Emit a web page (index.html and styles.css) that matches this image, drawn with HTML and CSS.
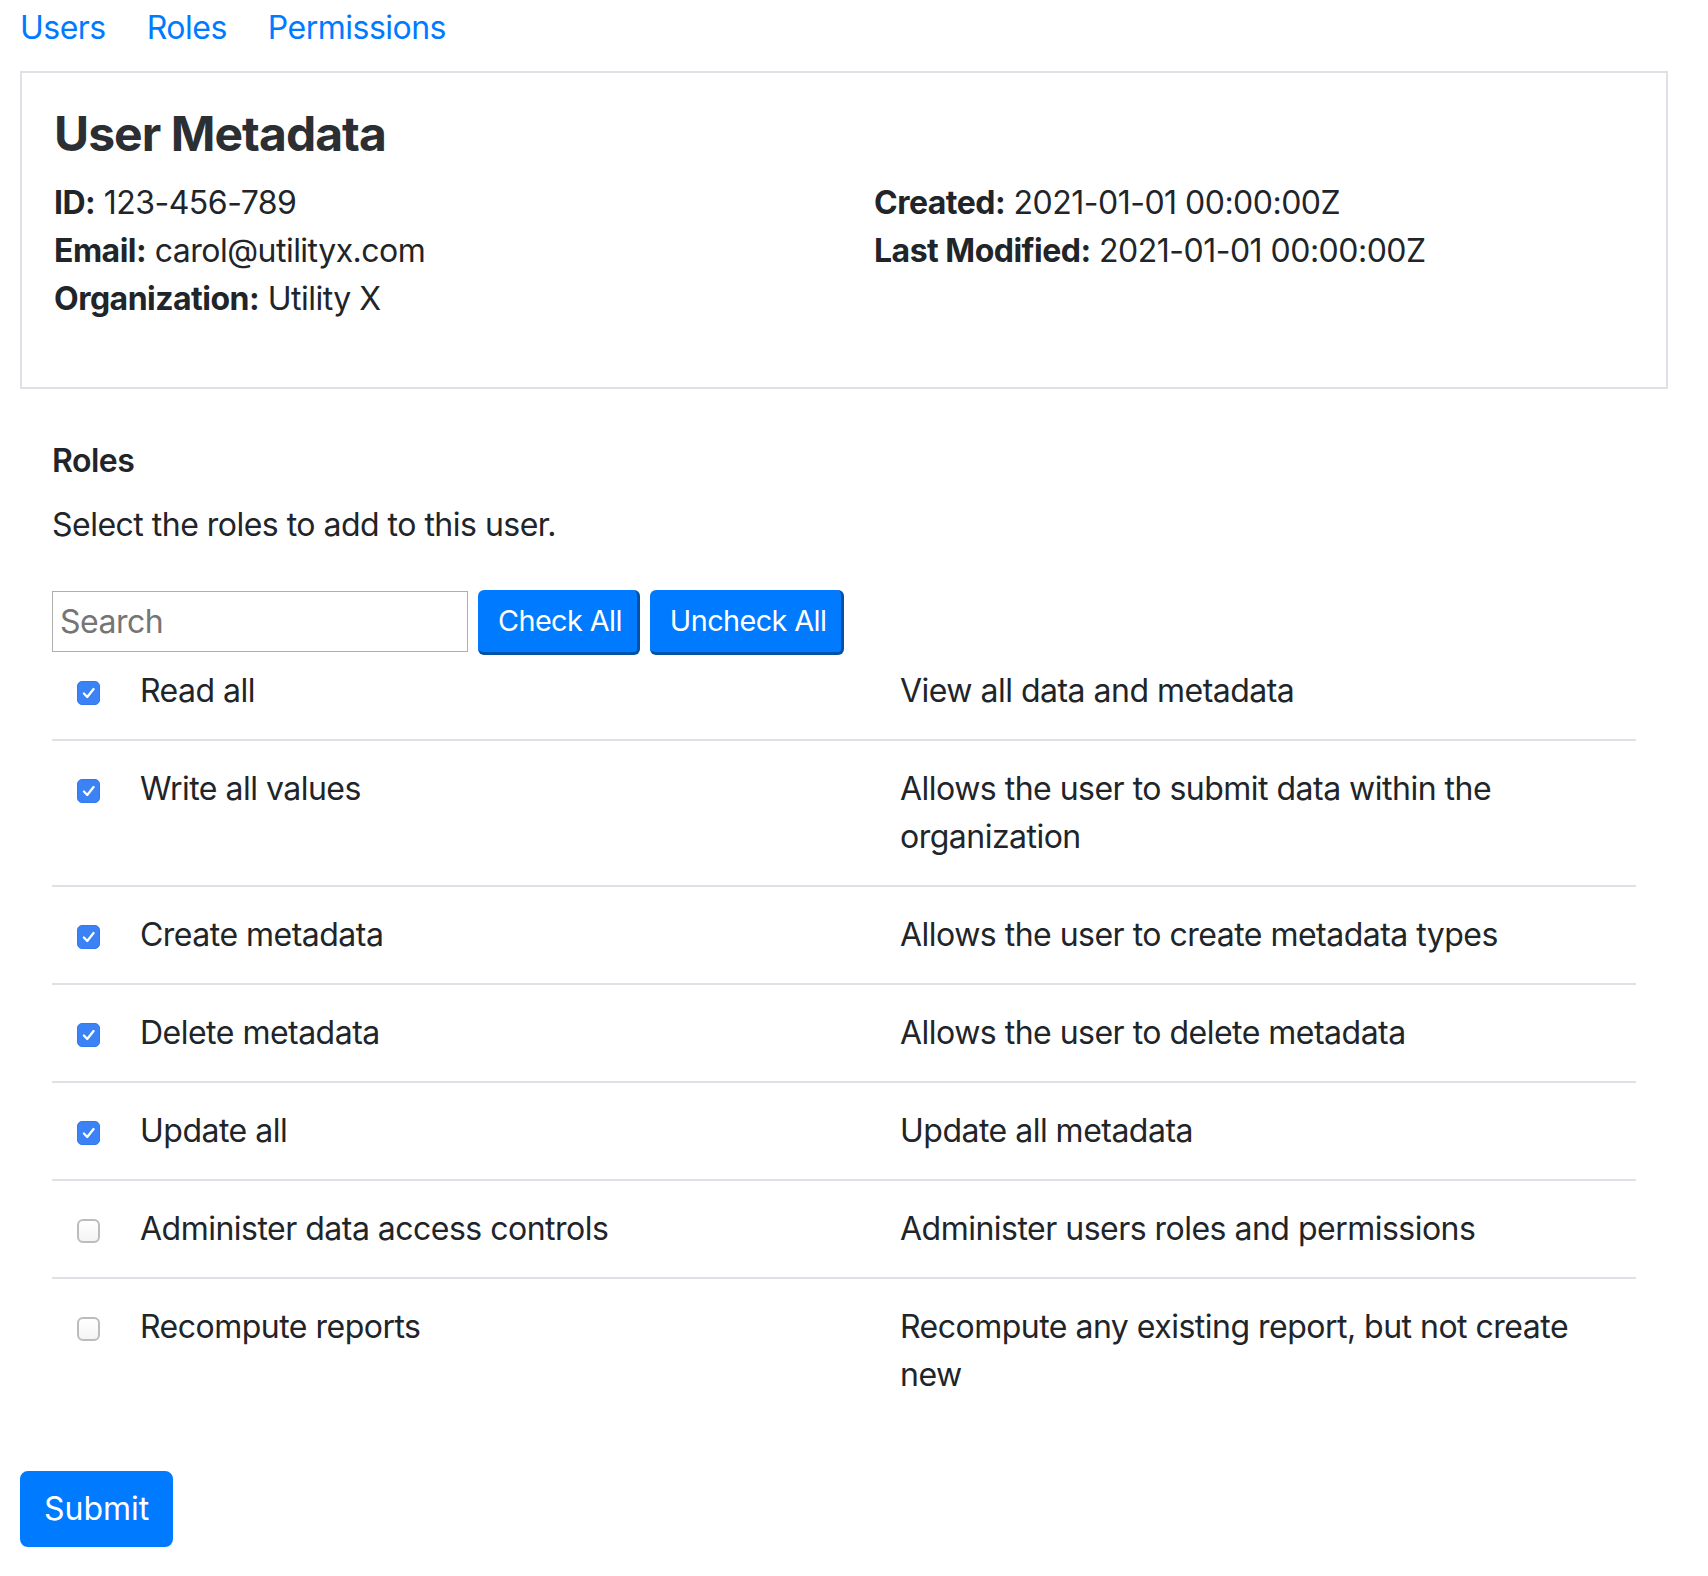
FILE: index.html
```html
<!DOCTYPE html>
<html lang="en">
<head>
<meta charset="utf-8">
<title>User Metadata</title>
<link rel="stylesheet" href="styles.css">
</head>
<body>
<div class="page">
  <nav class="tabs">
    <a href="#">Users</a>
    <a href="#">Roles</a>
    <a href="#">Permissions</a>
  </nav>

  <div class="card">
    <h4 class="card-title">User Metadata</h4>
    <div class="meta">
      <div class="meta-col">
        <div><b>ID:</b> 123-456-789</div>
        <div><b>Email:</b> carol@utilityx.com</div>
        <div><b>Organization:</b> Utility X</div>
      </div>
      <div class="meta-col">
        <div><b>Created:</b> 2021-01-01 00:00:00Z</div>
        <div><b>Last Modified:</b> 2021-01-01 00:00:00Z</div>
      </div>
    </div>
  </div>

  <section class="roles">
    <h6 class="roles-title">Roles</h6>
    <p class="roles-lead">Select the roles to add to this user.</p>
    <div class="controls">
      <input class="search" type="text" placeholder="Search">
      <button class="action" type="button">Check All</button>
      <button class="action" type="button">Uncheck All</button>
    </div>
    <div class="role-table">
      <div class="role">
        <div class="cell check-cell"><span class="cb on"><svg viewBox="0 0 24 24"><path d="M6.6 12.6 L10.3 16.4 L17.4 7.6"/></svg></span></div>
        <div class="cell">Read all</div>
        <div class="cell">View all data and metadata</div>
      </div>
      <div class="role">
        <div class="cell check-cell"><span class="cb on"><svg viewBox="0 0 24 24"><path d="M6.6 12.6 L10.3 16.4 L17.4 7.6"/></svg></span></div>
        <div class="cell">Write all values</div>
        <div class="cell">Allows the user to submit data within the organization</div>
      </div>
      <div class="role">
        <div class="cell check-cell"><span class="cb on"><svg viewBox="0 0 24 24"><path d="M6.6 12.6 L10.3 16.4 L17.4 7.6"/></svg></span></div>
        <div class="cell">Create metadata</div>
        <div class="cell">Allows the user to create metadata types</div>
      </div>
      <div class="role">
        <div class="cell check-cell"><span class="cb on"><svg viewBox="0 0 24 24"><path d="M6.6 12.6 L10.3 16.4 L17.4 7.6"/></svg></span></div>
        <div class="cell">Delete metadata</div>
        <div class="cell">Allows the user to delete metadata</div>
      </div>
      <div class="role">
        <div class="cell check-cell"><span class="cb on"><svg viewBox="0 0 24 24"><path d="M6.6 12.6 L10.3 16.4 L17.4 7.6"/></svg></span></div>
        <div class="cell">Update all</div>
        <div class="cell">Update all metadata</div>
      </div>
      <div class="role">
        <div class="cell check-cell"><span class="cb off"></span></div>
        <div class="cell">Administer data access controls</div>
        <div class="cell">Administer users roles and permissions</div>
      </div>
      <div class="role">
        <div class="cell check-cell"><span class="cb off"></span></div>
        <div class="cell">Recompute reports</div>
        <div class="cell">Recompute any existing report, but not create new</div>
      </div>
    </div>
  </section>

  <button class="submit" type="button">Submit</button>
</div>
</body>
</html>
```

FILE: styles.css
```css
html, body {
  margin: 0;
  padding: 0;
  background: #fff;
}

body {
  font-family: Inter, "Liberation Sans", sans-serif;
  font-size: 32px;
  line-height: 48px;
  letter-spacing: -0.016em;
  color: #212529;
}

.page {
  width: 1648px;
  margin-left: 20px;
}

.tabs {
  display: flex;
  gap: 41px;
  height: 48px;
  padding-top: 4px;
  margin-bottom: 19px;
}

.tabs a {
  color: #007bff;
  text-decoration: none;
}

.card {
  border: 2px solid #dee2e6;
  padding: 32px;
}

.card-title {
  margin: 0 0 16px;
  font-size: 48px;
  line-height: 57.6px;
  font-weight: 700;
  letter-spacing: -0.02em;
  color: #2b2f33;
}

.meta {
  display: grid;
  grid-template-columns: 820px 1fr;
  margin-bottom: 32px;
}

.meta b {
  font-weight: 700;
}

.roles {
  padding: 0 32px;
  margin-top: 48px;
}

.roles-title {
  margin: 0 0 16px;
  font-size: 32px;
  line-height: 48px;
  font-weight: 600;
}

.roles-lead {
  margin: 0 0 41px;
}

.controls {
  display: flex;
  align-items: flex-start;
  gap: 10px;
}

.search {
  box-sizing: border-box;
  width: 416px;
  height: 61px;
  margin: 1px 0 0;
  padding: 0 7px;
  border: 1px solid #aeaeae;
  border-radius: 0;
  font-family: inherit;
  font-size: 32px;
  letter-spacing: -0.016em;
  color: #212529;
  outline: none;
}

.search::placeholder {
  color: #757575;
}

.action {
  box-sizing: border-box;
  height: 65px;
  padding: 0 15px 0 20px;
  background: #007bff;
  color: #fff;
  border: 0;
  border-right: 3px solid #0052a6;
  border-bottom: 3px solid #0052a6;
  border-radius: 6px;
  font-family: inherit;
  font-size: 28.8px;
  letter-spacing: -0.02em;
  line-height: 34px;
}

.role {
  display: grid;
  grid-template-columns: 64px 1fr 1fr;
  padding: 24px 0;
  border-bottom: 2px solid #dee2e6;
}

.role:first-child {
  padding-top: 12px;
}

.role:last-child {
  border-bottom: 0;
}

.cell {
  padding: 0 24px;
}

.check-cell {
  padding: 0 0 0 24.5px;
}

.cb {
  display: block;
  box-sizing: border-box;
  width: 23.5px;
  height: 24px;
  margin-top: 14.5px;
  border-radius: 5px;
}

.cb.on {
  background: #3a82f6;
  border: 1px solid #3479ee;
}

.cb.on svg {
  display: block;
  width: 100%;
  height: 100%;
}

.cb.on path {
  fill: none;
  stroke: #fff;
  stroke-width: 2.6;
  stroke-linecap: round;
  stroke-linejoin: round;
}

.cb.off {
  background: linear-gradient(#ffffff, #f4f4f4);
  border: 2px solid #bcbcbc;
  border-radius: 6px;
}

.submit {
  display: block;
  margin-top: 48px;
  padding: 12px 22px;
  background: #007bff;
  color: #fff;
  border: 2px solid #007bff;
  border-radius: 8px;
  font-family: inherit;
  font-size: 32px;
  line-height: 48px;
}
```
